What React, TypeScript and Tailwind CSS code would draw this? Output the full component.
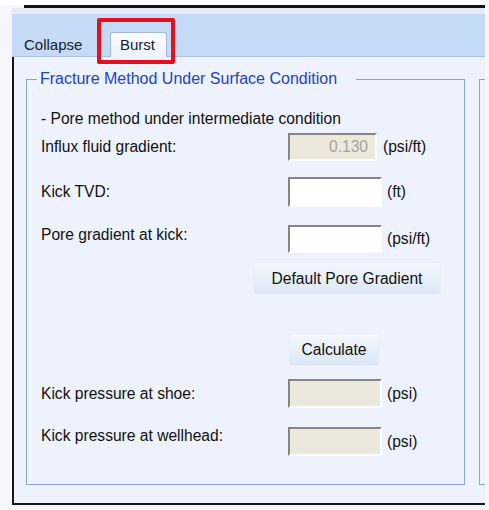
import React from "react";

function Field({ w, h, disabled, value }: { w: number; h: number; disabled?: boolean; value?: string }) {
  return (
    <div
      className={
        "shrink-0 flex items-center justify-end pr-[7px] border-2 border-t-[#868682] border-l-[#868682] border-r-[#fbfbfb] border-b-[#fbfbfb] text-[#a8a49c] " +
        (disabled ? "bg-[#ece8dc]" : "bg-white")
      }
      style={{ width: w, height: h }}
    >
      {value}
    </div>
  );
}

export default function App() {
  const blue = "border-[#88a5d6]";
  return (
    <div className="w-[489px] h-[510px] bg-[#f6f7fb] overflow-hidden relative font-['Liberation_Sans',Arial,sans-serif] text-[15.6px] text-[#111]">
      <div className="h-[5px] bg-white" />
      <div className="ml-[12px] w-[473px]">
        <div className="h-[3px] ml-[12px] bg-[#121212]" />
        <div className="h-[6px] bg-[#e3ebf9]" />
        <div className="h-[43px] bg-[#c4daf6] border-b border-[#a9c2e6] flex items-end pl-[12px]">
          <div className="w-[59px] h-[20px] leading-[20px] text-[15px] text-[#18202e] mb-[1px]">Collapse</div>
          <div className="relative ml-[27px] -mb-px h-[25px] w-[57px] rounded-t-[3px] border border-b-0 border-[#a3b8d8] bg-gradient-to-b from-[#fbfcff] to-[#edf2fc] pl-[9px] leading-[24px] text-[15px] text-[#18202e]">
            Burst
          </div>
        </div>
        <div className="h-[448px] border-l-2 border-b-2 border-[#151515] bg-[#edf2fc] overflow-hidden flex items-start pt-[14px] pl-[12px]">
          <div className="w-[439px] shrink-0">
            <div className="flex h-[16px]">
              <div className={"w-[11px] mt-[8px] border-l border-t " + blue} />
              <div className="pl-[3px] pr-[19px] leading-[16px] text-[16px] text-[#1d43c9] whitespace-nowrap">
                Fracture Method Under Surface Condition
              </div>
              <div className={"flex-1 mt-[8px] border-t border-r " + blue} />
            </div>
            <div className={"border-l border-r border-b pl-[14px] pt-[22px] pb-[28px] " + blue}>
              <div className="h-[20px] leading-[20px] whitespace-nowrap">- Pore method under intermediate condition</div>

              <div className="mt-[4px] h-[28px] flex items-center">
                <div className="w-[247px] shrink-0">Influx fluid gradient:</div>
                <Field w={89} h={28} disabled value="0.130" />
                <div className="ml-[6px]">(psi/ft)</div>
              </div>

              <div className="mt-[16px] h-[30px] flex items-center">
                <div className="w-[247px] shrink-0">Kick TVD:</div>
                <Field w={94} h={30} />
                <div className="ml-[5px]">(ft)</div>
              </div>

              <div className="mt-[18px] h-[28px] flex items-center">
                <div className="w-[247px] shrink-0 mb-[8px]">Pore gradient at kick:</div>
                <Field w={94} h={28} />
                <div className="ml-[5px]">(psi/ft)</div>
              </div>

              <div className="mt-[9px] h-[33px] flex items-center">
                <button
                  type="button"
                  className="ml-[212px] w-[188px] h-[33px] flex items-center justify-center rounded-[3px] border border-[#e9eff9] bg-gradient-to-b from-[#f3f7fd] to-[#dce7f6] text-[#111]"
                >
                  Default Pore Gradient
                </button>
              </div>

              <div className="mt-[38px] h-[33px] flex items-center">
                <button
                  type="button"
                  className="ml-[247px] w-[92px] h-[33px] flex items-center justify-center rounded-[3px] border border-[#e9eff9] bg-gradient-to-b from-[#f3f7fd] to-[#dce7f6] text-[#111]"
                >
                  Calculate
                </button>
              </div>

              <div className="mt-[13px] h-[29px] flex items-center">
                <div className="w-[247px] shrink-0">Kick pressure at shoe:</div>
                <Field w={94} h={29} disabled />
                <div className="ml-[5px]">(psi)</div>
              </div>

              <div className="mt-[19px] h-[29px] flex items-center">
                <div className="w-[247px] shrink-0 mb-[12px]">Kick pressure at wellhead:</div>
                <Field w={94} h={29} disabled />
                <div className="ml-[5px]">(psi)</div>
              </div>
            </div>
          </div>
          <div className={"ml-[14px] mt-[8px] w-[60px] h-[406px] shrink-0 border-l border-t border-b " + blue} />
        </div>
      </div>
      <div className="absolute left-[97px] top-[18px] w-[78px] h-[46px] border-[4px] border-[#e4101c] rounded-[2px]" />
    </div>
  );
}
